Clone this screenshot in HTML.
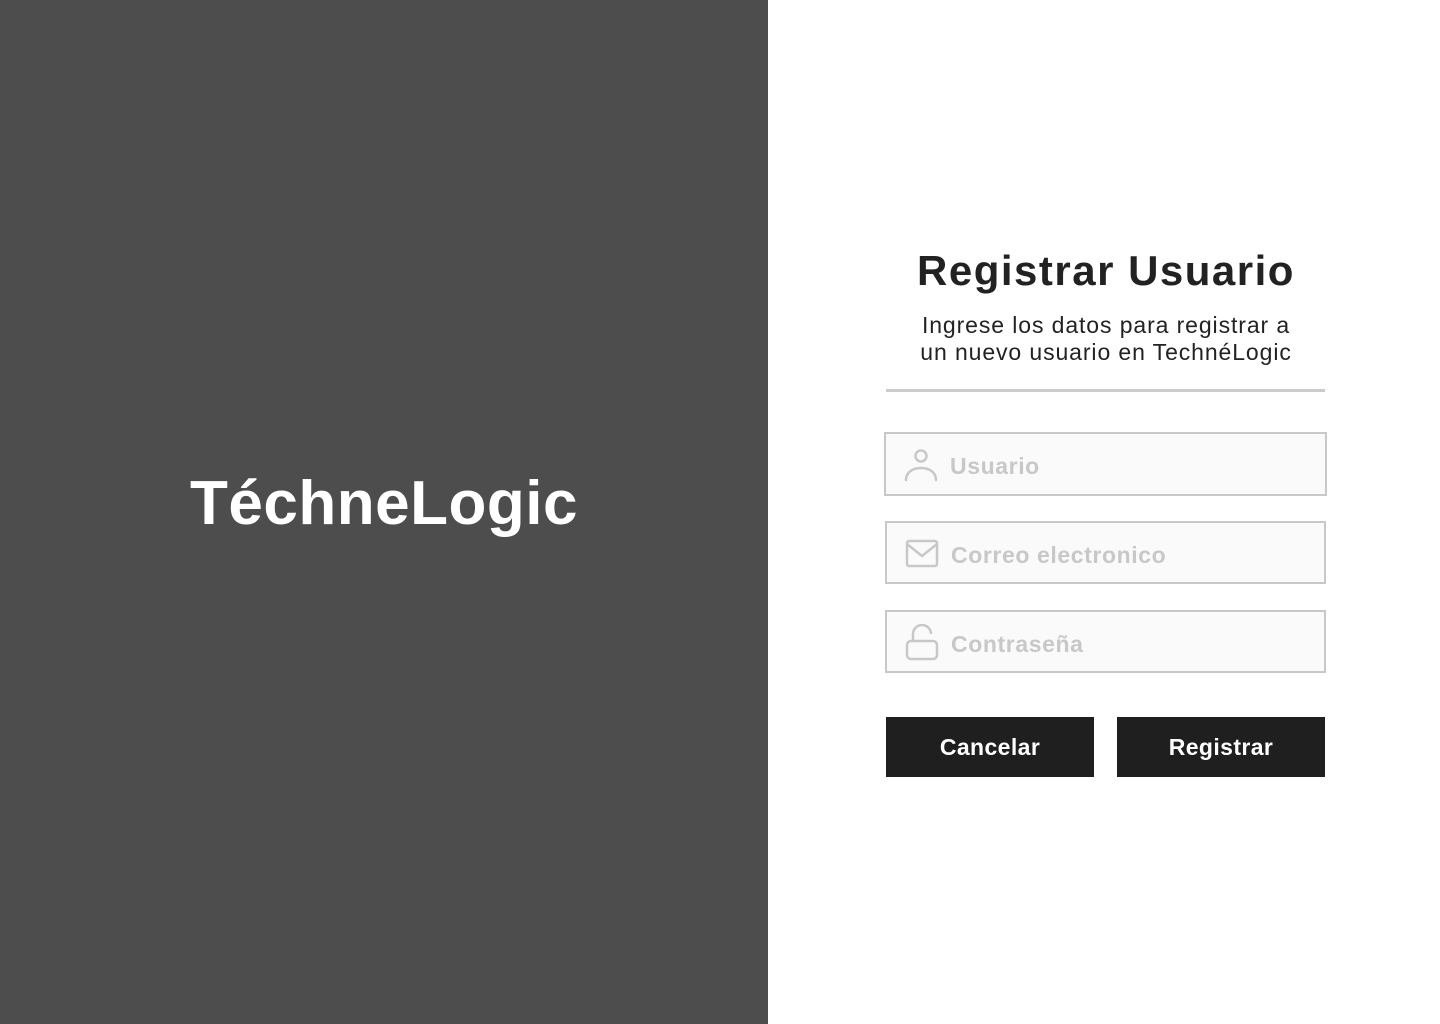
<!DOCTYPE html>
<html><head><meta charset="utf-8"><style>
*{margin:0;padding:0;box-sizing:border-box}
body{width:1440px;height:1024px;position:relative;background:#fff;font-family:"Liberation Sans",sans-serif;overflow:hidden}
.left{position:absolute;left:0;top:0;width:768px;height:1024px;background:#4d4d4d}
.logo{position:absolute;left:0;width:768px;top:466px;text-align:center;color:#fff;font-weight:bold;font-size:62px;line-height:76px;letter-spacing:0.5px}
.title{position:absolute;left:846px;width:520px;top:243px;text-align:center;color:#222;font-weight:bold;font-size:42px;line-height:56px;letter-spacing:1.5px}
.sub{position:absolute;left:846px;width:520px;top:312px;text-align:center;color:#222;font-size:23px;line-height:27px;letter-spacing:0.9px}
.hr{position:absolute;left:886px;top:389px;width:439px;height:3px;background:#cccccc}
.in{position:absolute;left:885px;width:441px;height:63px;border:2px solid #c8c8c8;background:#fafafa}
.in span{position:absolute;left:64px;top:18px;font-size:23px;font-weight:bold;color:#c8c8c8;line-height:28px;letter-spacing:0.6px}
.in svg{position:absolute;left:17px;top:12px}
.btn{position:absolute;top:717px;width:208px;height:60px;background:#1f1f1f;color:#fff;font-weight:bold;font-size:23px;line-height:60px;text-align:center;letter-spacing:0.4px}
</style></head><body>
<div class="left"><div class="logo">TéchneLogic</div></div>
<div class="title">Registrar Usuario</div>
<div class="sub">Ingrese los datos para registrar a<br>un nuevo usuario en TechnéLogic</div>
<div class="hr"></div>
<div class="in" style="top:432px;left:884px;width:443px;height:64px">
<svg width="36" height="36" viewBox="0 0 36 36" fill="none" stroke="#c8c8c8" stroke-width="2.5" stroke-linecap="round"><circle cx="18" cy="10" r="5.5"/><path d="M3 34 C3 26 10 22 18 22 C26 22 33 26 33 34"/></svg>
<span>Usuario</span></div>
<div class="in" style="top:521px">
<svg width="36" height="36" viewBox="0 0 36 36" fill="none" stroke="#c8c8c8" stroke-width="2.5" stroke-linejoin="round"><rect x="3" y="6" width="30" height="25" rx="2"/><path d="M3 9 L18 21 L33 9"/></svg>
<span>Correo electronico</span></div>
<div class="in" style="top:610px">
<svg width="36" height="40" viewBox="0 0 36 40" fill="none" stroke="#c8c8c8" stroke-width="2.5"><rect x="3" y="17" width="30" height="18" rx="4"/><path d="M9 17 V10 A9 9 0 0 1 27 10"/></svg>
<span>Contraseña</span></div>
<div class="btn" style="left:886px">Cancelar</div>
<div class="btn" style="left:1117px">Registrar</div>
</body></html>
